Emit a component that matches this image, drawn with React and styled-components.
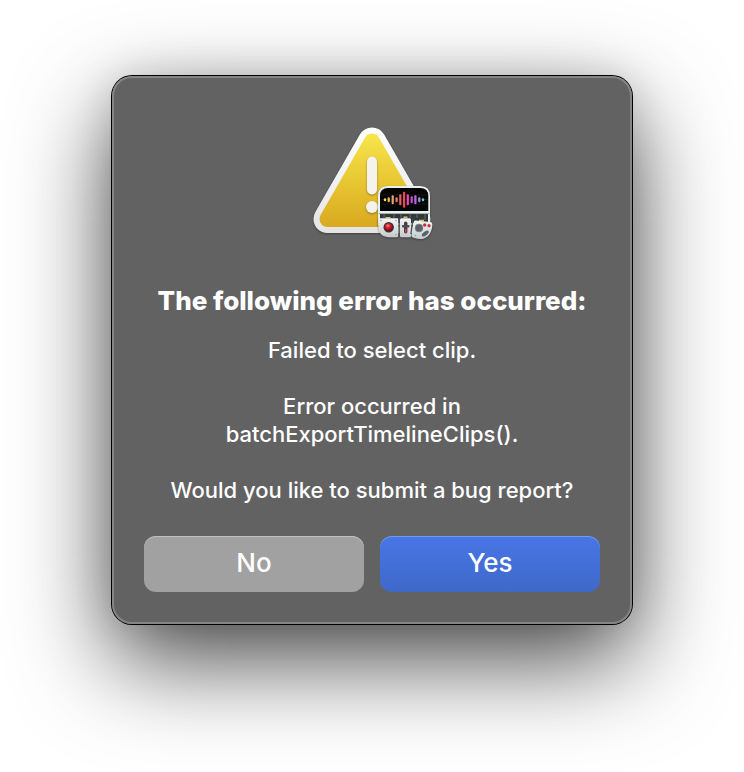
import React, { memo } from 'react';
import styled, { createGlobalStyle } from 'styled-components';

const GlobalStyle = createGlobalStyle`
    * {
        box-sizing: border-box;
    }

    body {
        margin: 0;
        background: #fff;
        font-family: Inter, "Liberation Sans", sans-serif;
    }
`;

const Backdrop = styled.main`
    display: flex;
    justify-content: center;
    align-items: flex-start;
    min-height: 100vh;
    padding: 76px 24px 148px;
    overflow: hidden;
`;

const Dialog = styled.section`
    display: flex;
    flex-direction: column;
    align-items: center;
    width: 100%;
    max-width: 520px;
    padding: 40px 32px 32px;
    border-radius: 20px;
    background: #626262;
    color: #fff;
    text-align: center;
    box-shadow:
        inset 0 0 0 2px #858585,
        0 0 0 1px #000,
        0 36px 96px rgba(0, 0, 0, 0.72),
        0 0 40px rgba(0, 0, 0, 0.12);
`;

const Icon = styled.svg`
    display: block;
    width: 128px;
    height: 128px;
    overflow: visible;
`;

const Title = styled.h1`
    margin: 41px 0 19px;
    font-size: 26px;
    font-weight: 800;
    line-height: 32px;
`;

const Message = styled.p`
    margin: 0;
    font-size: 22px;
    font-weight: 500;
    line-height: 28px;
    white-space: pre-line;
`;

const Actions = styled.div`
    display: flex;
    gap: 16px;
    width: 100%;
    margin-top: 32px;
`;

const Button = styled.button`
    flex: 1;
    height: 56px;
    padding: 0 16px 2px;
    border: 0;
    border-radius: 12px;
    background: ${({ $primary }) => ($primary ? 'linear-gradient(#4776e6, #3f68c8)' : '#a1a1a1')};
    box-shadow: inset 0 1px 0 ${({ $primary }) => ($primary ? '#759aed' : '#c0c0c0')};
    color: #fff;
    font-family: inherit;
    font-size: 26px;
    font-weight: 500;
    line-height: 32px;
`;

// x position, height, colour
const wave = [
    [77, 3, '#f0dc50'],
    [80.7, 5, '#e8bd55'],
    [84.7, 9, '#e8a070'],
    [88.6, 5, '#e08068'],
    [92.3, 11, '#e06060'],
    [96.1, 16, '#ea4654'],
    [99.8, 11, '#e54bb4'],
    [103.7, 7, '#c94ad8'],
    [107.4, 9, '#b863e8'],
    [111.3, 5, '#a58aea'],
    [115, 3, '#62cbd0'],
];

const WarningIcon = memo(() => (
    <Icon viewBox="0 0 128 128" aria-hidden="true">
        <defs>
            <linearGradient id="frame" gradientUnits="userSpaceOnUse" x1="0" y1="11" x2="0" y2="117">
                <stop offset="0" stopColor="#ffffff" />
                <stop offset="1" stopColor="#e4e4e4" />
            </linearGradient>
            <linearGradient id="yellow" gradientUnits="userSpaceOnUse" x1="0" y1="17" x2="0" y2="111">
                <stop offset="0" stopColor="#f7e64b" />
                <stop offset="1" stopColor="#d9a91f" />
            </linearGradient>
            <linearGradient id="metal" x1="0" y1="0" x2="0" y2="1">
                <stop offset="0" stopColor="#f2f4f5" />
                <stop offset="1" stopColor="#c4cacd" />
            </linearGradient>
            <radialGradient id="ball" cx="0.4" cy="0.3" r="0.7">
                <stop offset="0" stopColor="#ff8585" />
                <stop offset="0.4" stopColor="#d51f2c" />
                <stop offset="1" stopColor="#6d0710" />
            </radialGradient>
            <filter id="soft" x="-20%" y="-20%" width="140%" height="140%" colorInterpolationFilters="sRGB">
                <feDropShadow dx="0" dy="1" stdDeviation="1" floodOpacity="0.35" />
            </filter>
        </defs>

        <g strokeLinejoin="round" filter="url(#soft)">
            <path d="M64 25.500 L108.500 103 H19.500 Z" fill="url(#frame)" stroke="url(#frame)" strokeWidth="28" />
            <path d="M64 25.500 L108.500 103 H19.500 Z" fill="url(#yellow)" stroke="url(#yellow)" strokeWidth="16" />
        </g>
        <g fill="#f4f3ee" filter="url(#soft)">
            <rect x="59" y="40.5" width="10" height="38" rx="5" />
            <circle cx="64" cy="91" r="6" />
        </g>

        <g filter="url(#soft)">
            <path d="M70 98 V80 Q70 70 80 70 H112 Q122 70 122 80 V109 H70 Z" fill="#e9f0f0" />
            <path d="M72 95 V80 Q72 72 80 72 H112 Q120.300 72 120.300 80 V95 Z" fill="#050505" />
            <path d="M72 98 H120 V107 H72 Z" fill="#33383d" />
            <path d="M70.500 97.500 H121.500" stroke="#8c9499" strokeWidth="0.7" />
            <path d="M76 98 V102 M86 98 V102 M93 98 V102 M102 98 V102 M109 98 V102 M117 98 V104" stroke="#596168" strokeWidth="1.2" />
            <path d="M72.500 79 H120 M72.500 83.500 H120 M72.500 88 H120" stroke="#202020" strokeWidth="0.6" />
            {wave.map(([x, height, color]) => (
                <rect key={x} x={x - 1.1} y={83.7 - height / 2} width="2.2" height={height} rx="1" fill={color} />
            ))}
            <path d="M77.500 101.800 H82.500 M95.500 101.300 H99.500 M111 104.500 H116" stroke="#d8cf45" strokeWidth="1.5" />
        </g>

        <g filter="url(#soft)">
            <path d="M71.500 102.300 H89 Q90.300 102.300 90.300 103.700 V119.500 Q90.300 121.300 88.500 121.300 H80 Q70.300 120.500 70.300 110 V103.500 Q70.300 102.300 71.500 102.300 Z" fill="url(#metal)" />
            <rect x="92" y="102.300" width="11" height="19" rx="1.500" fill="url(#metal)" />
            <path d="M107.500 104.500 L122.500 106 Q124.600 106.300 124.300 108.500 C124 115 121.500 120.500 116 122.500 Q112 123.800 106.500 122 Q103 121 103.400 119 L105.700 106 Q105.900 104.300 107.500 104.500 Z" fill="url(#metal)" />
        </g>
        <path d="M91.200 102 V121" stroke="#4a4f54" strokeWidth="1.300" />
        <path d="M105 103 L102.800 118" stroke="#4a4f54" strokeWidth="1.200" />
        <circle cx="80.700" cy="111.300" r="5.200" fill="#343538" />
        <circle cx="80.700" cy="111.300" r="4" fill="url(#ball)" />
        <rect x="96" y="105.500" width="3.400" height="12" rx="1.700" fill="#55353a" />
        <path d="M97.700 113 V116.500" stroke="#e04450" strokeWidth="1.400" />
        <rect x="94" y="109" width="7.400" height="2.600" rx="0.800" fill="#484d52" />
        <g fill="#8a9196">
            <circle cx="73" cy="104.500" r="0.700" />
            <circle cx="88" cy="104.500" r="0.700" />
            <circle cx="88" cy="118.800" r="0.700" />
            <circle cx="107.500" cy="119.500" r="0.700" />
        </g>
        <circle cx="111" cy="112" r="4" fill="#596269" stroke="#8b949a" strokeWidth="0.600" />
        <circle cx="116.700" cy="109" r="1.700" fill="#c32f3c" />
        <circle cx="121" cy="109.700" r="1.600" fill="#c32f3c" />
        <ellipse cx="117.300" cy="117.500" rx="4" ry="2" transform="rotate(-38 117.300 117.500)" fill="#596269" />
    </Icon>
));

const message = `Failed to select clip.

Error occurred in
batchExportTimelineClips().

Would you like to submit a bug report?`;

const App = memo(() => (
    <>
        <GlobalStyle />
        <Backdrop>
            <Dialog role="alertdialog" aria-labelledby="title" aria-describedby="message">
                <WarningIcon />
                <Title id="title">The following error has occurred:</Title>
                <Message id="message">{message}</Message>
                <Actions>
                    <Button type="button">No</Button>
                    <Button type="button" $primary>Yes</Button>
                </Actions>
            </Dialog>
        </Backdrop>
    </>
));

export default App;
